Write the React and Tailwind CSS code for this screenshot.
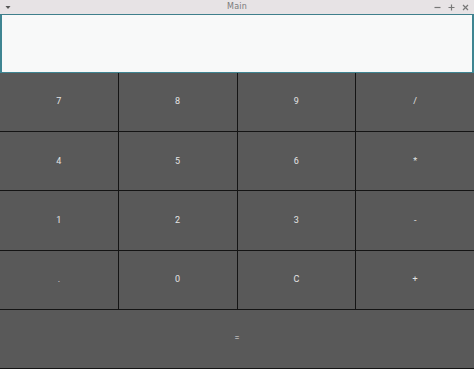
const keys = [
  "7", "8", "9", "/",
  "4", "5", "6", "*",
  "1", "2", "3", "-",
  ".", "0", "C", "+",
];

function TitleBar() {
  return (
    <div className="relative flex h-[15px] shrink-0 items-center justify-center border-b border-[#3f7f8c] bg-[#e7e3e5] text-[8px] text-[#7a7a7a]">
      <svg className="absolute left-[5px] top-[5px]" width="6" height="5" viewBox="0 0 6 5">
        <path d="M0.5 1 L5.5 1 L3 4 Z" fill="#555" />
      </svg>
      <span className="font-medium tracking-wide" style={{ fontFamily: "'DejaVu Sans', sans-serif" }}>
        Main
      </span>
      <div className="absolute right-[5px] top-[4px] flex items-center gap-[7px]">
        <svg width="7" height="7" viewBox="0 0 7 7">
          <path d="M0.5 3.5 H6.5" stroke="#777" strokeWidth="1.2" />
        </svg>
        <svg width="7" height="7" viewBox="0 0 7 7">
          <path d="M0.5 3.5 H6.5 M3.5 0.5 V6.5" stroke="#777" strokeWidth="1.2" />
        </svg>
        <svg width="7" height="7" viewBox="0 0 7 7">
          <path d="M1 1 L6 6 M6 1 L1 6" stroke="#777" strokeWidth="1.2" />
        </svg>
      </div>
    </div>
  );
}

export default function App() {
  return (
    <div
      className="flex h-[369px] w-[474px] flex-col overflow-hidden bg-[#2b2b2b]"
      style={{ fontFamily: "Roboto, 'Noto Sans', sans-serif" }}
    >
      <TitleBar />
      <div className="h-[58px] shrink-0 border-x-2 border-b border-x-[#3f8592] border-b-[#3f8592] bg-[#f8f9f9]" />
      <div className="grid flex-1 grid-cols-4 grid-rows-5 gap-[1px] bg-[#141414] pb-[1px]">
        {keys.map((k) => (
          <button
            key={k}
            className="flex items-center justify-center bg-[#595959] text-[9px] text-[#e4e4e4]"
          >
            {k}
          </button>
        ))}
        <button className="col-span-4 flex items-center justify-center bg-[#595959] text-[9px] text-[#e4e4e4]">
          =
        </button>
      </div>
    </div>
  );
}
